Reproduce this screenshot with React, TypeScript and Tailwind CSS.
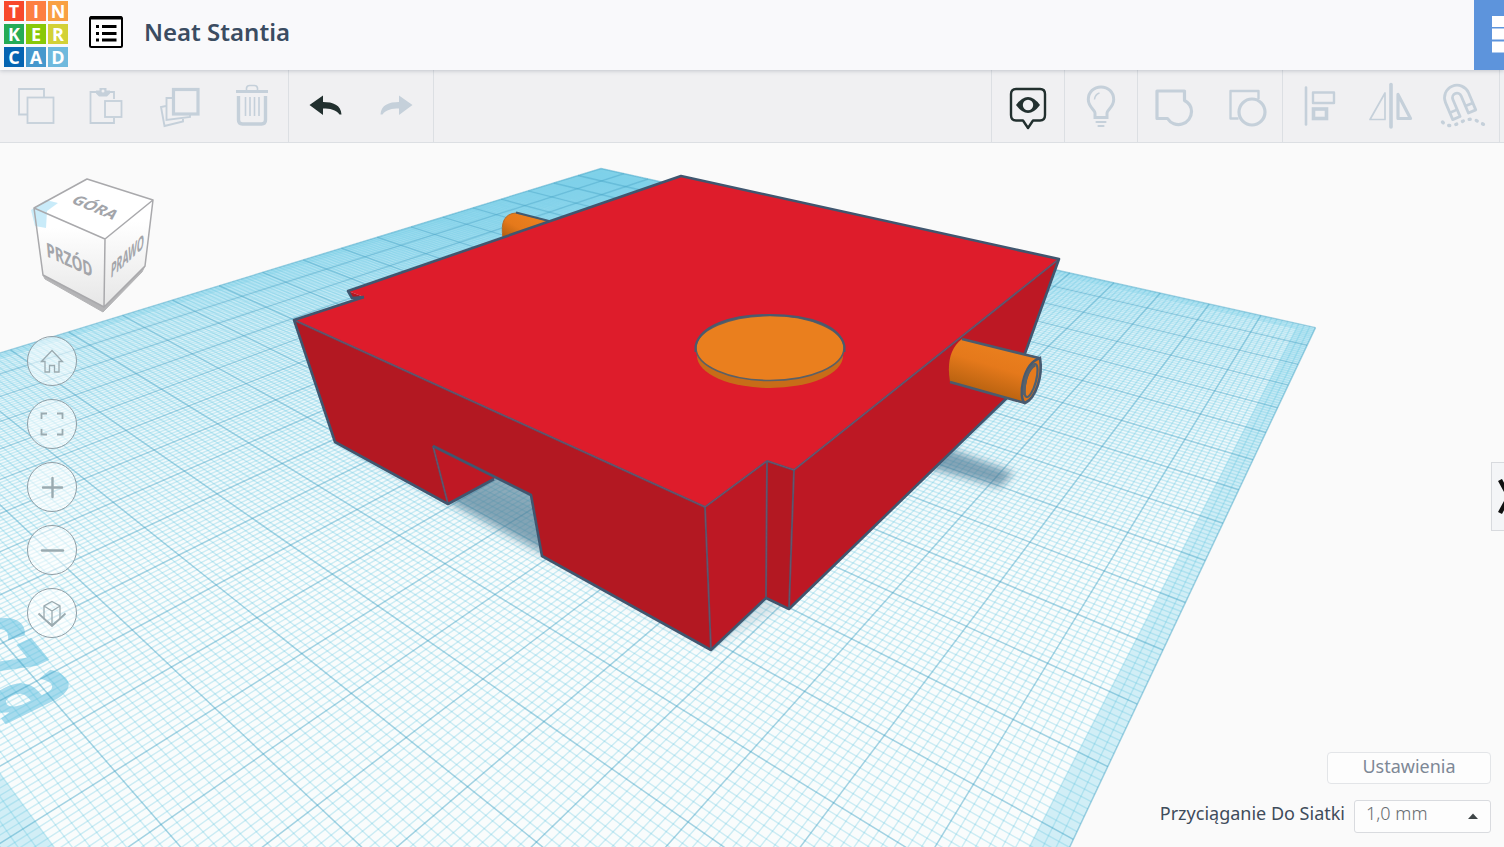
import React from "react";

type Point = [number, number];

/* ---------- Workplane projection (units are 10 mm cells) ---------- */

const CELLS = 20;

function project(u: number, v: number): Point {
  const w = 1 - 0.018181 * u - 0.024367 * v;
  return [
    (601 + 11.808 * u - 37.162 * v) / w,
    (168.5 + 2.0 * u + 2.81 * v) / w,
  ];
}

const fmt = ([x, y]: Point) => `${x.toFixed(2)} ${y.toFixed(2)}`;
const segment = (a: Point, b: Point) => `M${fmt(a)}L${fmt(b)}`;
const quad = (u0: number, v0: number, u1: number, v1: number) =>
  `M${fmt(project(u0, v0))}L${fmt(project(u1, v0))}L${fmt(project(u1, v1))}L${fmt(project(u0, v1))}Z`;

function gridPath(axis: "u" | "v", major: boolean) {
  let d = "";
  for (let i = 0; i <= CELLS * 10; i += 1) {
    if ((i % 10 === 0) !== major) continue;
    const t = i / 10;
    d +=
      axis === "u"
        ? segment(project(t, 0), project(t, CELLS))
        : segment(project(0, t), project(CELLS, t));
  }
  return d;
}

const BORDER = 0.3;
const minorU = gridPath("u", false);
const minorV = gridPath("v", false);
const majorU = gridPath("u", true);
const majorV = gridPath("v", true);
const plane = quad(0, 0, CELLS, CELLS);
const borders = [
  quad(0, 0, CELLS, BORDER),
  quad(0, CELLS - BORDER, CELLS, CELLS),
  quad(0, BORDER, BORDER, CELLS - BORDER),
  quad(CELLS - BORDER, BORDER, CELLS, CELLS - BORDER),
].join("");

function Scene() {
  return (
    <svg
      className="absolute inset-0 h-full w-full"
      viewBox="0 143 1504 704"
      preserveAspectRatio="xMidYMid slice"
      aria-hidden="true"
    >
      <defs>
        <linearGradient id="haze" x1="0" y1="168" x2="0" y2="560" gradientUnits="userSpaceOnUse">
          <stop offset="0" stopColor="#9cdcf3" />
          <stop offset="0.4" stopColor="#e2f4fa" />
          <stop offset="1" stopColor="#f9fcfc" />
        </linearGradient>
        <linearGradient id="rod" x1="1001" y1="347" x2="986" y2="396" gradientUnits="userSpaceOnUse">
          <stop offset="0" stopColor="#ea7f1e" />
          <stop offset="0.4" stopColor="#e5791b" />
          <stop offset="1" stopColor="#b5600f" />
        </linearGradient>
        <linearGradient id="rodBack" x1="525" y1="214" x2="510" y2="240" gradientUnits="userSpaceOnUse">
          <stop offset="0" stopColor="#ea7f1e" />
          <stop offset="0.5" stopColor="#e5791b" />
          <stop offset="1" stopColor="#b5600f" />
        </linearGradient>
        <filter id="soft" x="-30%" y="-30%" width="160%" height="160%">
          <feGaussianBlur stdDeviation="4" />
        </filter>
      </defs>

      <path d={plane} fill="url(#haze)" />
      <path d={borders} fill="#a9dff0" fillOpacity="0.5" />
      <text
        transform="matrix(0.445 0.54 -1.256 0.617 9 728)"
        textAnchor="end"
        fontSize="100"
        fontWeight="700"
        fill="#6fc4e2"
        fillOpacity="0.6"
        className="font-['Noto_Sans',sans-serif]"
      >
        cza
      </text>
      <g fill="none">
        <path d={minorU} stroke="#5cc3df" strokeOpacity="0.29" strokeWidth="1.4" />
        <path d={minorV} stroke="#5cc3df" strokeOpacity="0.29" strokeWidth="1.4" />
        <path d={majorU} stroke="#3a9fc4" strokeOpacity="0.45" strokeWidth="1.5" />
        <path d={majorV} stroke="#3a9fc4" strokeOpacity="0.45" strokeWidth="1.5" />
      </g>

      {/* Cast shadows */}
      <path d="M925 446L955 451L1014 473L1000 487L930 468Z" fill="#4a7690" fillOpacity="0.65" filter="url(#soft)" />
      <path d="M448 500L494 470L536 488L552 556Z" fill="#4a7690" fillOpacity="0.6" filter="url(#soft)" />
      <path d="M335 442L711 650L794 600L700 560Z" fill="#5a8aa0" fillOpacity="0.22" filter="url(#soft)" />

      {/* Rear rod */}
      <path d="M503 238Q499 214 516 213L549 221L520 240Z" fill="url(#rodBack)" stroke="#b96a24" />
      <path d="M516 212.500L549 221" stroke="#405a72" strokeWidth="2" fill="none" />

      {/* Body */}
      <g strokeLinejoin="round">
        <path d="M348 291L352 299L364 297Z" fill="#b31822" />
        <path d="M433 446L448 504L494 479L496 477Z" fill="#bf1824" />
        <path d="M294 320L705 507L711 650L542 556L531 495L433 446L448 504L335 442Z" fill="#b31822" />
        <path d="M705 507L767 461L766 598L711 650Z" fill="#bd1824" />
        <path d="M767 461L794 470L789 609L766 598Z" fill="#b31822" />
        <path d="M794 470L1059 259L1010 395L789 609Z" fill="#bd1824" />
        <path d="M294 320L364 297L348 291L681 176L1059 259L794 470L767 461L705 507Z" fill="#de1c2b" />
        <g fill="none" stroke="#475d77" strokeWidth="2" strokeOpacity="0.8">
          <path d="M294 320L705 507L767 461L794 470L1059 259" />
          <path d="M705 507L711 650M767 461L766 598M794 470L789 609M433 446L448 504" />
        </g>
        <g fill="none" stroke="#40566f" strokeWidth="2.600">
          <path d="M364 297L294 320L335 442L448 504L494 479" />
          <path d="M433 446L531 495L542 556L711 650L766 598L789 609L1010 395L1059 259L681 176L348 291L352 298L364 297" />
        </g>
      </g>

      {/* Disc */}
      <path d="M697 350V356A73 32 0 0 0 843 356V350Z" fill="#c86c18" />
      <ellipse cx="770" cy="348" rx="74" ry="32.500" fill="#ea7f1e" stroke="#5a6066" strokeWidth="1.600" />
      <path d="M695.500 352V346C700 326 730 315 770 315S840 326 844.500 346V352" fill="none" stroke="#4a5b6e" strokeWidth="2" />

      {/* Front rod */}
      <path d="M962 339L1040 358L1024 403L950 382Q945 352 962 339Z" fill="url(#rod)" />
      <path d="M962 339L1039 358M950 382L1025 403" stroke="#4a5b6e" strokeWidth="2.600" fill="none" />
      <path
        d="M1040 358C1043 376 1036 398 1025 403C1018 399 1022 364 1040 358Z"
        fill="#d9731a"
        stroke="#475a70"
        strokeWidth="2.600"
      />
      <ellipse cx="1031" cy="380.500" rx="5" ry="17" transform="rotate(15 1031 380.500)" fill="#e67b1c" stroke="#4f6070" strokeWidth="2.200" />
      <path d="M1035 365C1027 370 1024 382 1024 395" fill="none" stroke="#56616c" strokeWidth="3" />
    </svg>
  );
}

/* ---------- View cube ---------- */

function ViewCube() {
  return (
    <button type="button" aria-label="Kostka widoku" className="block">
      <svg width="130" height="142" viewBox="27 174 130 142" className="font-['Noto_Sans',sans-serif]">
        <defs>
          <linearGradient id="cubeFace" x1="0" y1="0" x2="0" y2="1">
            <stop offset="0.2" stopColor="#ffffff" />
            <stop offset="1" stopColor="#e6e6e6" />
          </linearGradient>
        </defs>
        <path d="M43 275L104 307L145 266L142 272L103 312L45 279Z" fill="#b4b4b6" stroke="#b4b4b6" strokeLinejoin="round" />
        <path d="M34 208L105 239L104 307L43 275Z" fill="url(#cubeFace)" />
        <path d="M105 239L153 200L145 266L104 307Z" fill="url(#cubeFace)" />
        <path d="M34 208L87 179L153 200L105 239Z" fill="#fff" />
        <path d="M31 210L46 200L58 203L47 211L46 228L35 226Z" fill="#bfe7f8" fillOpacity="0.85" />
        <g fill="none" stroke="#a9a9ac" strokeWidth="1.500" strokeLinejoin="round">
          <path d="M34 208L87 179L153 200L105 239ZM34 208L43 275L104 307L105 239M104 307L145 266L153 200" />
        </g>
        <g fill="#a3a5aa" fontWeight="700" fontSize="18" textAnchor="middle">
          <text transform="matrix(0.82 0.34 -0.66 0.58 91 211)">GÓRA</text>
          <text transform="matrix(0.76 0.35 0.1 1.12 70 267)">PRZÓD</text>
          <text transform="matrix(0.5 -0.47 -0.06 1.12 127 263)">PRAWO</text>
        </g>
      </svg>
    </button>
  );
}

/* ---------- Navigation ---------- */

const navButtons: { label: string; icon: React.ReactNode }[] = [
  {
    label: "Widok główny",
    icon: (
      <path
        d="M14.500 25.500L25 14.500L35.500 25.500H32V36H27.500V29.500H22.500V36H18V25.500Z"
        strokeLinejoin="miter"
        strokeWidth="1.300"
      />
    ),
  },
  {
    label: "Dopasuj widok",
    icon: <path d="M14.500 20V14.500H20M30 14.500H35.500V20M35.500 30V35.500H30M20 35.500H14.500V30" strokeWidth="1.800" />,
  },
  { label: "Powiększ", icon: <path d="M25.500 16V35M16 25.500H35" strokeWidth="2.400" strokeLinecap="round" /> },
  { label: "Pomniejsz", icon: <path d="M15 25.500H36" strokeWidth="2.400" strokeLinecap="round" /> },
  {
    label: "Rzut płaski",
    icon: (
      <>
        <path d="M25 13.500L33 18V31L25 37L17 31V18ZM17 18L25 23L33 18M25 23V37" strokeWidth="1.300" />
        <path d="M11.500 25.500L25 38L38.500 25.500" strokeWidth="1.800" />
      </>
    ),
  },
];

/* ---------- Toolbar ---------- */

type Tool = { label: string; dark?: boolean; icon: React.ReactNode };

/* Every glyph sits in a 48 × 48 box centred in its button. */
const editTools: Tool[] = [
  {
    label: "Kopiuj",
    icon: (
      <>
        <path d="M15 32.500H7V7H32V15" strokeWidth="1.800" />
        <rect x="15.500" y="15.500" width="26" height="25.500" strokeWidth="1.800" />
      </>
    ),
  },
  {
    label: "Wklej",
    icon: (
      <>
        <path d="M30 17V10H24.500M13.500 10H6.500V41H30V36" strokeWidth="1.800" />
        <path d="M12 8.500H15.500V6H22.500V8.500H26V11.500L23 14.500H15L12 11.500Z" fill="currentColor" stroke="none" />
        <circle cx="19" cy="9" r="1.500" fill="#f0f0f2" stroke="none" />
        <rect x="21" y="19" width="16.500" height="16" strokeWidth="1.800" />
      </>
    ),
  },
  {
    label: "Powiel",
    icon: (
      <>
        <rect x="17.500" y="7.500" width="24.500" height="24.500" strokeWidth="3.200" />
        <path d="M16 16H10.500V38L34 35V33" strokeWidth="1.900" />
        <path d="M10 24L5 25L8.500 44L27 39.500V37" strokeWidth="1.900" />
      </>
    ),
  },
  {
    label: "Usuń",
    icon: (
      <>
        <path d="M8 9.500H40" strokeWidth="3" />
        <path d="M18.500 8V6Q19 3.500 21.500 3.500H26.500Q29 3.500 29.500 6V8" strokeWidth="1.600" />
        <path d="M10.500 14V38Q10.500 42 14.500 42H33.500Q37.500 42 37.500 38V14" strokeWidth="3.400" />
        <path d="M17.500 15V34M22 15V34M26.500 15V34M31 15V34" strokeWidth="1.600" />
      </>
    ),
  },
];

const historyTools: Tool[] = [
  {
    label: "Cofnij",
    dark: true,
    icon: (
      <path
        d="M8.500 23L22 13.500V20C32 20 40 23 40.500 32.500H38.500C35 27.500 29 26.500 22 26.500V33Z"
        fill="currentColor"
        stroke="none"
      />
    ),
  },
  {
    label: "Ponów",
    icon: (
      <path
        d="M39.500 23L26 13.500V20C16 20 8 23 7.500 32.500H9.500C13 27.500 19 26.500 26 26.500V33Z"
        fill="currentColor"
        stroke="none"
      />
    ),
  },
];

const viewTools: Tool[][] = [
  [
    {
      label: "Pokaż ukryte",
      dark: true,
      icon: (
        <>
          <path
            d="M12 7H36Q41 7 41 12V33Q41 38.500 36 38.500H29L24 46L19 38.500H12Q7 38.500 7 33V12Q7 7 12 7Z"
            strokeWidth="2.400"
            strokeLinejoin="round"
          />
          <path d="M12 23Q24 7 36 23Q24 39 12 23Z" fill="currentColor" stroke="none" />
          <circle cx="24" cy="23" r="5.200" fill="#f0f0f2" stroke="none" />
        </>
      ),
    },
  ],
  [
    {
      label: "Widoczność",
      icon: (
        <>
          <path
            d="M18 35.500V31C18 28 11.300 25 11.300 17.500C11.300 10 17 5 24 5S36.700 10 36.700 17.500C36.700 25 30 28 30 31V35.500Z"
            strokeWidth="3"
          />
          <path d="M17.500 17.500Q18 12.500 22.500 11" strokeWidth="1.500" />
          <path d="M19.500 40H28.500M21.500 44H26.500" strokeWidth="2.200" strokeLinecap="round" />
        </>
      ),
    },
  ],
  [
    {
      label: "Grupuj",
      icon: (
        <path
          d="M7 9H34.500V18.500C39.500 21 41.500 25 41.500 29.500A13 13 0 0 1 17.500 36.500H7Z"
          strokeWidth="3.200"
          strokeLinejoin="round"
        />
      ),
    },
    {
      label: "Rozgrupuj",
      icon: (
        <>
          <path d="M16.500 36.500H8.500V9H36.500V17" strokeWidth="2.400" strokeLinejoin="round" />
          <circle cx="30" cy="30" r="13" strokeWidth="3.200" />
        </>
      ),
    },
  ],
  [
    {
      label: "Wyrównaj",
      icon: (
        <>
          <path d="M11 5.500V42.500" strokeWidth="2.600" strokeLinecap="round" />
          <rect x="18" y="10.500" width="21" height="10.500" strokeWidth="2.400" strokeLinejoin="round" />
          <rect x="18.500" y="27" width="13" height="9.500" strokeWidth="3.600" />
        </>
      ),
    },
    {
      label: "Lustro",
      icon: (
        <>
          <path d="M24 2.500V45" strokeWidth="3.600" strokeLinecap="round" />
          <path d="M18 11V37.500H3Z" strokeWidth="1.700" strokeLinejoin="round" />
          <path d="M31 12.500V36.500H43.500Z" strokeWidth="3.200" strokeLinejoin="round" />
        </>
      ),
    },
    {
      label: "Magnes",
      icon: (
        <>
          <g transform="rotate(-23 19 18)" strokeLinejoin="round">
            <path d="M6.500 34V15.500A12.500 12.500 0 0 1 31.500 15.500V34H23.500V15.500A4.500 4.500 0 0 0 14.500 15.500V34Z" strokeWidth="2.800" />
            <path d="M6.500 26.500H14.500M23.500 26.500H31.500" strokeWidth="2.600" />
          </g>
          <path
            d="M3.500 40C8 45 14 44 19 41.500S29 36.500 34 37.500S41 41 45 42.500"
            strokeWidth="3.400"
            strokeDasharray="1 6.200"
            strokeLinecap="round"
          />
        </>
      ),
    },
  ],
];

function ToolButton({ tool }: { tool: Tool }) {
  return (
    <button
      type="button"
      aria-label={tool.label}
      className={`flex h-full w-[72px] items-center justify-center ${tool.dark ? "text-[#22302f]" : "text-[#c5d0da]"}`}
    >
      <svg width="48" height="48" viewBox="0 0 48 48" fill="none" stroke="currentColor">
        {tool.icon}
      </svg>
    </button>
  );
}

function ToolGroup({ tools, divider }: { tools: Tool[]; divider: string }) {
  return (
    <div className={`flex h-full shrink-0 border-[#dcdfe3] ${divider}`}>
      {tools.map((tool) => (
        <ToolButton key={tool.label} tool={tool} />
      ))}
    </div>
  );
}

/* ---------- Logo ---------- */

const logoTiles: [string, string][] = [
  ["T", "bg-[#f8492c]"],
  ["I", "bg-[#fd7f42]"],
  ["N", "bg-[#f9a042]"],
  ["K", "bg-[#25ab56]"],
  ["E", "bg-[#88c808]"],
  ["R", "bg-[#d3d136]"],
  ["C", "bg-[#0564b2]"],
  ["A", "bg-[#4698cd]"],
  ["D", "bg-[#6fb9dd]"],
];

export default function App() {
  return (
    <div className="flex h-screen flex-col overflow-hidden bg-[#fafafa] font-['Noto_Sans','Open_Sans',sans-serif] text-lg text-[#3f4c5b]">
      <header className="relative z-10 flex h-[70px] shrink-0 items-center bg-[#f9f9fb] shadow-[0_1px_4px_rgba(60,70,90,0.25)]">
        <a href="#" aria-label="Tinkercad" className="ml-1 grid grid-cols-3 gap-x-[2px] gap-y-[3px] pb-[2px]">
          {logoTiles.map(([letter, color]) => (
            <span
              key={letter}
              className={`flex size-[20px] items-center justify-center font-['Open_Sans',sans-serif] text-lg leading-none font-bold text-white ${color}`}
            >
              {letter}
            </span>
          ))}
        </a>
        <button type="button" aria-label="Lista projektów" className="ml-[21px] pb-[6px]">
          <svg width="34" height="32" viewBox="0 0 34 32" className="block">
            <rect x="1" y="1" width="32" height="30" rx="1.500" fill="#fff" stroke="#000" strokeWidth="2" />
            <path d="M1 2H33" stroke="#000" strokeWidth="3" />
            <g fill="#000">
              <rect x="7" y="9" width="3" height="3" />
              <rect x="7" y="16" width="3" height="3" />
              <rect x="7" y="22.500" width="3" height="3" />
              <rect x="13" y="9" width="14.500" height="3" />
              <rect x="13" y="16" width="14.500" height="3" />
              <rect x="13" y="22.500" width="14.500" height="3" />
            </g>
          </svg>
        </button>
        <h1 className="ml-[21px] pb-[6px] text-2xl font-semibold text-[#3b4c61]">Neat Stantia</h1>
        <button type="button" aria-label="Projektowanie 3D" className="ml-auto h-full w-[30px] overflow-hidden bg-[#5d94dc] pl-[18px]">
          <svg width="12" height="40" viewBox="0 0 12 40" className="block">
            <path d="M0 1H12V12H0ZM0 13.500H12V24.500H0ZM0 26.500H12V37.500H0Z" fill="#fff" />
          </svg>
        </button>
      </header>

      <nav aria-label="Narzędzia" className="flex h-[73px] shrink-0 overflow-hidden border-b border-[#dcdfe3] bg-[#f0f0f2]">
        <ToolGroup tools={editTools} divider="" />
        <ToolGroup tools={historyTools} divider="border-x" />
        <div className="ml-auto flex h-full">
          {viewTools.map((tools) => (
            <ToolGroup key={tools[0].label} tools={tools} divider="border-l" />
          ))}
          <div className="w-[5px] border-l border-[#dcdfe3]" />
        </div>
      </nav>

      <main className="relative flex flex-1 justify-between overflow-hidden">
        <Scene />
        <div className="relative flex flex-col items-start pt-[31px] pl-[27px]">
          <ViewCube />
          <div className="mt-5 flex flex-col gap-[13px]">
            {navButtons.map(({ label, icon }) => (
              <button
                key={label}
                type="button"
                aria-label={label}
                className="size-[50px] rounded-full border border-[#8f9ea6] bg-white/50 text-[#9aaab0]"
              >
                <svg width="48" height="48" viewBox="1 1 48 48" fill="none" stroke="currentColor" className="block">
                  {icon}
                </svg>
              </button>
            ))}
          </div>
        </div>

        <div className="relative flex flex-col items-end justify-end gap-[15px] pr-[13px] pb-[14px]">
          <button
            type="button"
            className="h-8 w-[164px] rounded border border-[#e3e5e8] bg-[#fdfdfd] pb-1 leading-[26px] text-[#7d8896]"
          >
            Ustawienia
          </button>
          <div className="flex items-center gap-[9px]">
            <label htmlFor="snap" className="pb-[6px]">
              Przyciąganie Do Siatki
            </label>
            <div className="relative">
              <select
                id="snap"
                defaultValue="1.0"
                className="block h-[33px] w-[137px] appearance-none rounded-[3px] border border-[#d9dbdf] bg-[#fdfdfd] pb-[6px] pl-[11px] leading-6 font-light text-[#666c70]"
              >
                <option value="0.1">0,1 mm</option>
                <option value="0.5">0,5 mm</option>
                <option value="1.0">1,0 mm</option>
              </select>
              <svg width="10" height="6" viewBox="0 0 10 6" className="pointer-events-none absolute top-[13px] right-[13px]">
                <path d="M0 6L5 0.500L10 6Z" fill="#3f4547" />
              </svg>
            </div>
          </div>
        </div>

        <button
          type="button"
          aria-label="Zwiń panel"
          className="absolute top-[319px] right-0 h-[69px] w-[13px] overflow-hidden border border-r-0 border-[#d8dade] bg-[#f4f5f7]"
        >
          <svg width="20" height="36" viewBox="0 0 20 36" fill="none" className="absolute top-[16px] left-[6px]">
            <path d="M2 1L11 17.500L2 34" stroke="#111" strokeWidth="4.500" />
          </svg>
        </button>
      </main>
    </div>
  );
}
